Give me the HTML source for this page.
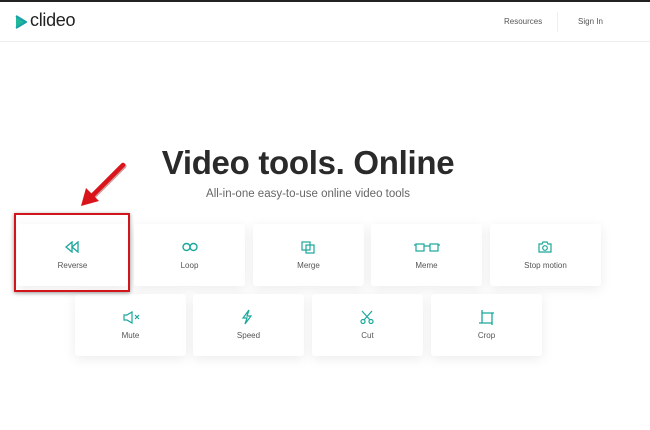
<!DOCTYPE html>
<html><head><meta charset="utf-8"><style>
*{margin:0;padding:0;box-sizing:border-box}
body{width:650px;height:430px;overflow:hidden;background:#fff;font-family:"Liberation Sans",sans-serif;position:relative;border-top:2px solid #222}
.hdr{position:absolute;top:0;left:0;width:650px;height:40px;border-bottom:1px solid #eee}
.logo{position:absolute;left:15px;top:9px;font-size:18px;color:#222;letter-spacing:-0.3px}
.logo svg{position:absolute;left:0;top:4px}
.logo span{position:absolute;left:15px;top:-1px}
.nav{position:absolute;top:15px;font-size:8px;color:#555}
.sep{position:absolute;left:557px;top:10px;width:1px;height:20px;background:#eee}
h1{position:absolute;top:142px;left:0;width:616px;text-align:center;font-size:33px;font-weight:bold;color:#2a2a2a;letter-spacing:-0.3px}
.sub{position:absolute;top:186px;left:0;width:616px;text-align:center;font-size:11.5px;color:#666}
.c{position:absolute;width:111px;height:62px;background:#fff;border-radius:3px;box-shadow:0 3px 12px rgba(0,0,0,.08);text-align:center}
.c svg{position:absolute;left:48px;top:17px}
.c b{position:absolute;left:0;right:0;top:37px;font-weight:normal;font-size:8px;color:#555}
.red{position:absolute;left:14px;top:211px;width:116px;height:79px;border:2px solid #d0161b;box-shadow:0 1px 4px rgba(0,0,0,.4)}
</style></head><body>
<div class="hdr">
<div class="logo"><svg width="12" height="14" viewBox="0 0 12 14"><path d="M1 1 L11 7 L1 13 Z" fill="#1fb89a"/><path d="M1 1 L11 7 L1 13" fill="none" stroke="#17a0a8" stroke-width="2" stroke-linejoin="round"/></svg><span>clideo</span></div>
<div class="nav" style="left:504px">Resources</div>
<div class="sep"></div>
<div class="nav" style="left:578px">Sign In</div>
</div>
<h1>Video tools. Online</h1>
<div class="sub">All-in-one easy-to-use online video tools</div>

<div class="c" style="left:17px;top:222px"><svg width="14" height="12" viewBox="0 0 14 12" fill="none" stroke="#1aa79c" stroke-width="1.3"><path d="M7 1L1 6l6 5zM13 1L7 6l6 5z"/></svg><b>Reverse</b></div>
<div class="c" style="left:134px;top:222px"><svg width="16" height="12" viewBox="0 0 16 12" fill="none" stroke="#1aa79c" stroke-width="1.4"><circle cx="4.5" cy="6" r="3.5"/><circle cx="11.5" cy="6" r="3.5"/></svg><b>Loop</b></div>
<div class="c" style="left:253px;top:222px"><svg width="14" height="13" viewBox="0 0 14 13" fill="none" stroke="#1aa79c" stroke-width="1.2"><rect x="1" y="1" width="8" height="8"/><rect x="5" y="4" width="8" height="8"/></svg><b>Merge</b></div>
<div class="c" style="left:371px;top:222px"><svg width="26" height="12" viewBox="0 0 26 12" fill="none" stroke="#1aa79c" stroke-width="1.2" style="left:43px"><rect x="2" y="3" width="8" height="7"/><rect x="16" y="3" width="8" height="7"/><path d="M10 5h6M0 4h2M24 4h2"/></svg><b>Meme</b></div>
<div class="c" style="left:490px;top:222px"><svg width="14" height="12" viewBox="0 0 14 12" fill="none" stroke="#1aa79c" stroke-width="1.2"><path d="M1 3h3l1-2h4l1 2h3v8H1z"/><circle cx="7" cy="7" r="2.3"/></svg><b>Stop motion</b></div>

<div class="c" style="left:75px;top:292px"><svg width="18" height="13" viewBox="0 0 18 13" fill="none" stroke="#1aa79c" stroke-width="1.2"><path d="M1 4h3l5-3v11L4 9H1z"/><path d="M12 4l4 4M16 4l-4 4"/></svg><b>Mute</b></div>
<div class="c" style="left:193px;top:292px"><svg width="12" height="16" viewBox="0 0 12 16" fill="none" stroke="#1aa79c" stroke-width="1.2" style="top:15px"><path d="M8 1L2 9h4l-2 6 6-8H6z"/></svg><b>Speed</b></div>
<div class="c" style="left:312px;top:292px"><svg width="14" height="14" viewBox="0 0 14 14" fill="none" stroke="#1aa79c" stroke-width="1.2" style="top:16px"><path d="M2 1l8 9M12 1L4 10"/><circle cx="3" cy="11.5" r="2"/><circle cx="11" cy="11.5" r="2"/></svg><b>Cut</b></div>
<div class="c" style="left:431px;top:292px"><svg width="15" height="15" viewBox="0 0 15 15" fill="none" stroke="#1aa79c" stroke-width="1.3" style="top:16px"><path d="M3 3h10v10H3z"/><path d="M3 0v3M0 13h3M13 13v2M13 3h2"/></svg><b>Crop</b></div>

<div class="red"></div>
<svg style="position:absolute;left:76px;top:158px" width="52" height="52" viewBox="0 0 52 52">
<path d="M47 5 L14 38" stroke="#8a0d0d" stroke-width="5" stroke-linecap="round" transform="translate(1,1)" opacity=".4"/>
<path d="M47 5 L14 38" stroke="#d9141a" stroke-width="4.5" stroke-linecap="round"/>
<path d="M5 46 L10 28 L23 41 Z" fill="#d9141a"/>
</svg>
</body></html>
